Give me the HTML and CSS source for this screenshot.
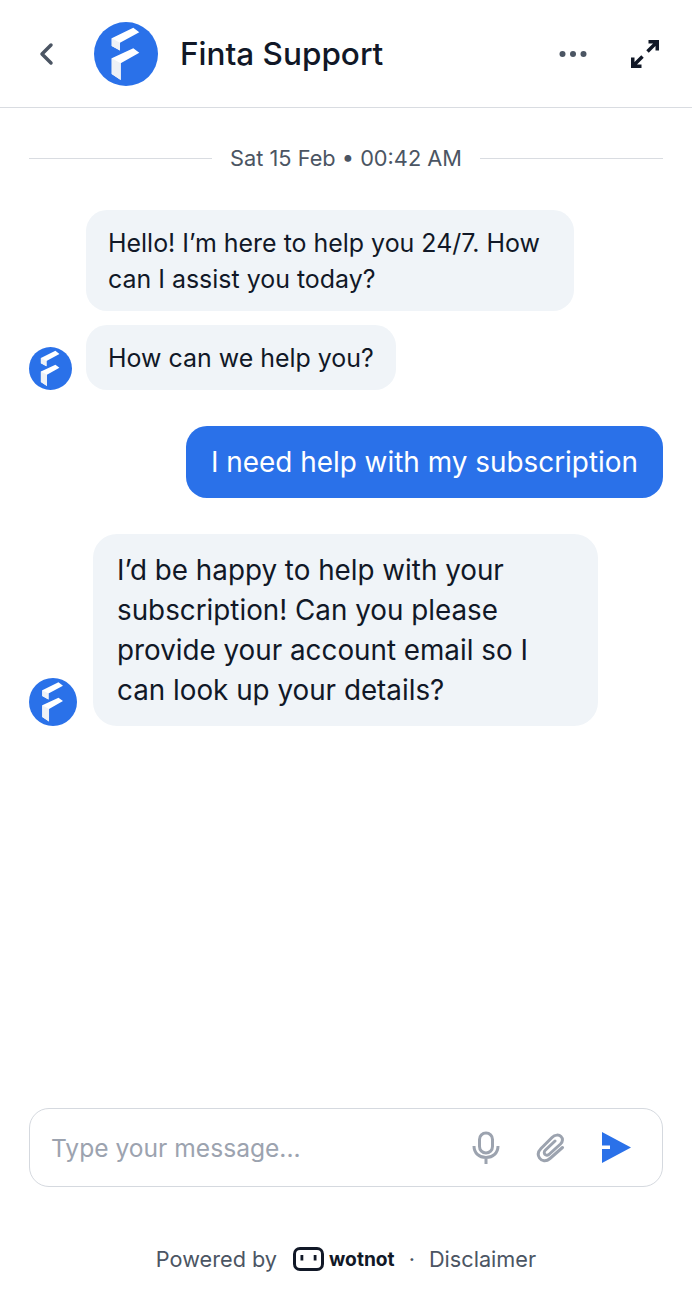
FILE: index.html
```html
<!DOCTYPE html>
<html lang="en">
<head>
    <meta charset="UTF-8">
    <meta name="viewport" content="width=device-width, initial-scale=1.0">
    <title>Finta Support</title>
    <link rel="stylesheet" href="styles.css">
</head>
<body>
    <svg class="sprite" width="0" height="0">
        <symbol id="finta" viewBox="0 0 64 64">
            <circle cx="32" cy="32" r="32" fill="#2a71e9"/>
            <path d="M17.700 16.300 39.300 5.700 45.300 10.300 26 20.700V28.500L17.700 24Z" fill="#fff"/>
            <path d="M17.700 16.300 26 20.700V28.500L17.700 24Z" fill="#eef1f6"/>
            <path d="M17.700 36.300 39.300 26.300 45.300 30.700 26.700 41.300V58L17.700 52Z" fill="#fff"/>
            <path d="M17.700 36.300 26.700 41.300V58L17.700 52Z" fill="#eef1f6"/>
        </symbol>
    </svg>

    <header class="chat-header">
        <button class="back">
            <svg width="18" height="26" viewBox="0 0 18 26"><path d="M14 4 5 13 14 22" fill="none" stroke="#4b5563" stroke-width="3.500" stroke-linecap="round" stroke-linejoin="round"/></svg>
        </button>
        <svg class="logo"><use href="#finta"/></svg>
        <h1 class="title">Finta Support</h1>
        <button class="more">
            <svg width="28" height="8" viewBox="0 0 28 8"><circle cx="3.500" cy="4" r="3" fill="#4b5563"/><circle cx="14" cy="4" r="3" fill="#4b5563"/><circle cx="24.500" cy="4" r="3" fill="#4b5563"/></svg>
        </button>
        <button class="expand">
            <svg width="28" height="28" viewBox="0 0 28 28"><path d="M16.500 11.500 25 3M17.500 1.750H26.250V10.500M11.500 16.500 3 25M1.750 17.500V26.250H10.500" fill="none" stroke="#111827" stroke-width="3.500"/></svg>
        </button>
    </header>

    <main class="messages">
        <div class="date-row"><span>Sat 15 Feb • 00:42 AM</span></div>

        <div class="group">
            <div class="bubble bot">Hello! I’m here to help you 24/7. How can I assist you today?</div>
            <div class="row">
                <svg class="avatar"><use href="#finta"/></svg>
                <div class="bubble bot">How can we help you?</div>
            </div>
        </div>

        <div class="bubble user">I need help with my subscription</div>

        <div class="row big">
            <svg class="avatar"><use href="#finta"/></svg>
            <div class="bubble bot large">I’d be happy to help with your subscription! Can you please provide your account email so I can look up your details?</div>
        </div>
    </main>

    <div class="composer">
        <span class="placeholder">Type your message...</span>
        <svg class="mic" width="30" height="34" viewBox="0 0 30 34"><rect x="8.500" y="2" width="13" height="20" rx="6.500" fill="none" stroke="#9ca3af" stroke-width="3"/><path d="M3 15C3 22 8 26.500 15 26.500S27 22 27 15M15 26.500V33" fill="none" stroke="#9ca3af" stroke-width="3"/></svg>
        <svg class="clip" width="30" height="32" viewBox="0 0 30 32"><path d="M26.500 15.500 14 26.500C10 30 5.500 29 3.500 26S2 19.500 5 16.500L16 5.500C19 2.500 23 2.500 25 4.500S27 9.500 24.500 12L13.500 22C12 23.500 10 23.500 9 22.500S8 19.500 9.500 18L19 9" fill="none" stroke="#9ca3af" stroke-width="3" stroke-linecap="round"/></svg>
        <svg class="send" width="30" height="31" viewBox="0 0 30 31"><path d="M0 0 29 15.500 0 31V17H8V13.500H0Z" fill="#2a71e9"/></svg>
    </div>

    <footer class="footer">
        <span>Powered by</span>
        <span class="brand">
            <svg width="31" height="24" viewBox="0 0 31 24"><rect x="1.500" y="1.500" width="28" height="21" rx="5.500" fill="none" stroke="#111827" stroke-width="3"/><rect x="7.500" y="8" width="2.800" height="5.500" fill="#111827"/><rect x="20.700" y="8" width="2.800" height="5.500" fill="#111827"/></svg>
            <b>wotnot</b>
        </span>
        <span class="dot">·</span>
        <span>Disclaimer</span>
    </footer>
</body>
</html>
```

FILE: styles.css
```css
* {
    box-sizing: border-box;
}
html, body {
    margin: 0;
    height: 100%;
}
body {
    display: flex;
    flex-direction: column;
    height: 1296px;
    font-family: Inter, "Liberation Sans", sans-serif;
    color: #111827;
    background-color: #fff;
    overflow: hidden;
}
button {
    display: flex;
    padding: 0;
    border: none;
    background-color: transparent;
}
.sprite {
    position: absolute;
}

/* header */
.chat-header {
    display: flex;
    align-items: center;
    height: 108px;
    padding: 0 33px 0 37px;
    border-bottom: 1px solid #d9dce1;
    flex-shrink: 0;
}
.logo {
    width: 64px;
    height: 64px;
    margin-left: 39px;
}
.title {
    margin: 0 0 0 22px;
    font-size: 31.500px;
    font-weight: 500;
    flex-grow: 1;
}
.more {
    margin-right: 44px;
}

/* messages */
.messages {
    display: flex;
    flex-direction: column;
    flex-grow: 1;
    padding: 37px 29px 0;
}
.date-row {
    display: flex;
    align-items: center;
    gap: 18px;
    height: 26px;
    margin-bottom: 39px;
    font-size: 21.750px;
    color: #4b5563;
}
.date-row::before, .date-row::after {
    content: "";
    flex-grow: 1;
    height: 1px;
    background-color: #d9dce1;
}
.group {
    display: flex;
    flex-direction: column;
    gap: 14px;
    margin-bottom: 36px;
}
.row {
    display: flex;
    align-items: flex-end;
    gap: 14px;
}
.avatar {
    width: 43px;
    height: 43px;
    flex-shrink: 0;
}
.bubble {
    font-size: 24.950px;
    line-height: 36px;
}
.bot {
    padding: 14.500px 22px;
    background-color: #f0f4f8;
    border-radius: 21px;
}
.group > .bot {
    width: 488px;
    margin-left: 57px;
}
.user {
    align-self: flex-end;
    padding: 18px 25px;
    margin-bottom: 36px;
    font-size: 27.900px;
    color: #fff;
    background-color: #2a71e9;
    border-radius: 21px;
}
.big {
    gap: 16px;
}
.big .avatar {
    width: 48px;
    height: 48px;
}
.row .large {
    width: 505px;
    padding: 16px 24px;
    font-size: 27.800px;
    line-height: 40px;
    border-radius: 24px;
}

/* composer */
.composer {
    display: flex;
    align-items: center;
    height: 79px;
    margin: 0 29px;
    padding: 0 30px 0 21px;
    border: 1px solid #d5d9df;
    border-radius: 20px;
    flex-shrink: 0;
}
.placeholder {
    flex-grow: 1;
    font-size: 24.600px;
    color: #9ca3af;
}
.mic {
    margin-right: 35px;
}
.clip {
    margin-right: 36px;
}

/* footer */
.footer {
    display: flex;
    align-items: center;
    justify-content: center;
    height: 109px;
    padding-top: 34px;
    font-size: 21.700px;
    color: #4b5563;
    flex-shrink: 0;
}
.brand {
    display: flex;
    align-items: center;
    gap: 5px;
    margin-left: 16px;
    color: #111827;
}
.brand b {
    font-size: 19.200px;
    font-weight: 700;
}
.dot {
    margin: 0 14px;
}
```
